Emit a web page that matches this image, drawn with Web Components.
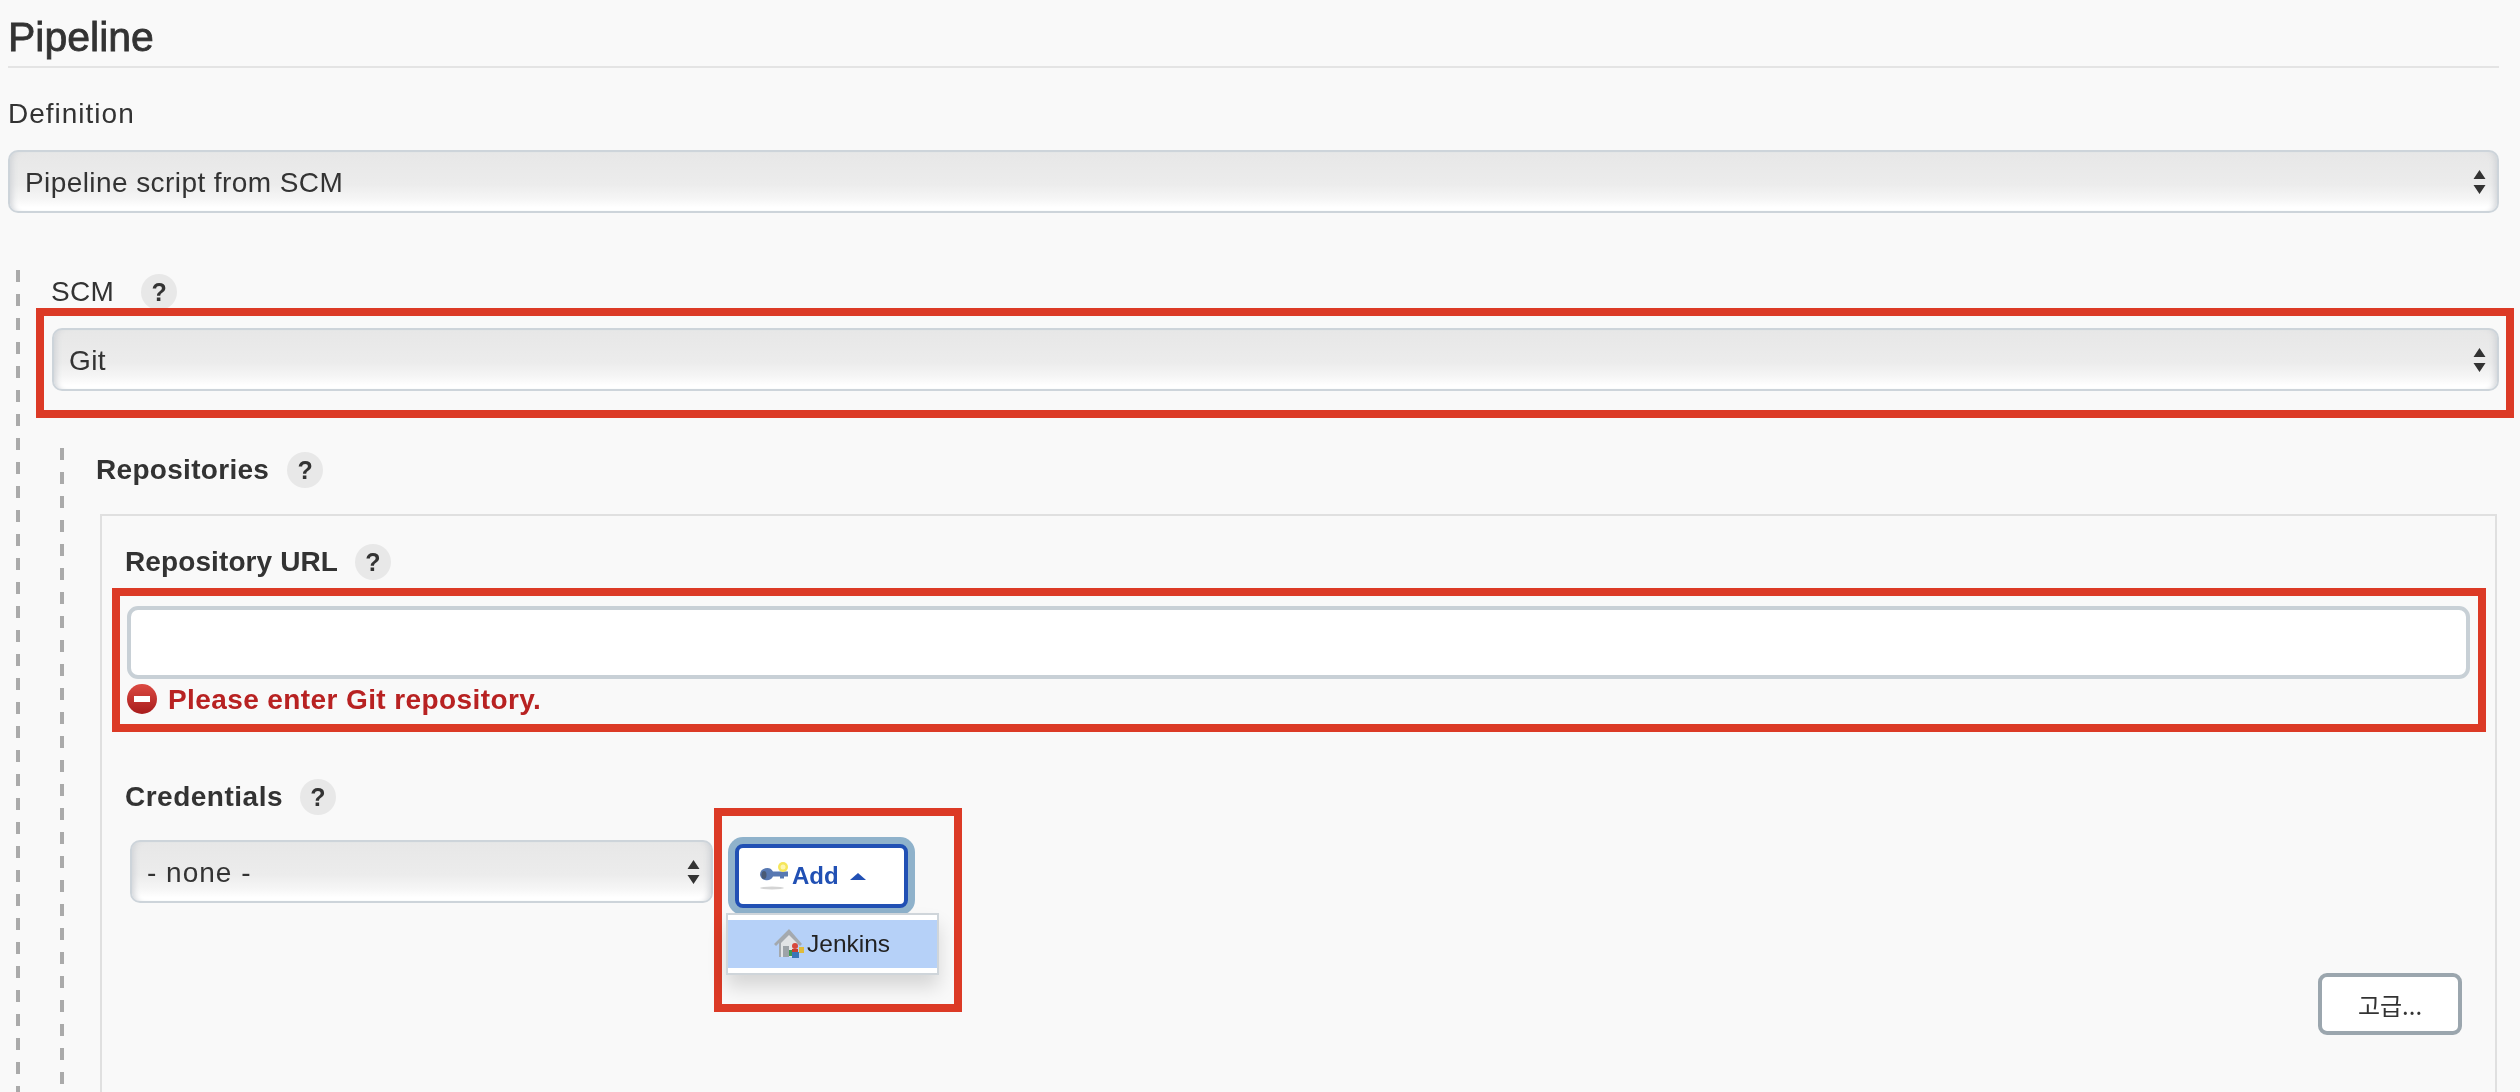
<!DOCTYPE html>
<html lang="en">
<head>
<meta charset="utf-8">
<title>Pipeline</title>
<style>
  html, body { margin: 0; height: 1092px; overflow: hidden; background: #f9f9f9; }
  body { font-family: "Liberation Sans", Arial, "Noto Sans CJK KR", sans-serif; color: #333; filter: blur(0.55px); }
</style>
</head>
<body>
<pipeline-page>
  <section-heading>Pipeline</section-heading>
  <field-label style="margin-top:28px;letter-spacing:1px">Definition</field-label>
  <fake-select style="margin-top:18px">Pipeline script from SCM</fake-select>

  <dashed-block style="margin:57px 0 0 8px">
    <field-label help style="height:32px;padding-top:2px;margin-left:-1px;--help-gap:27px">SCM</field-label>
    <red-callout style="margin:0 -15px 0 -16px;padding:12px 7px 19px 8px">
      <fake-select>Git</fake-select>
    </red-callout>

    <dashed-block style="margin:30px 0 0 8px">
      <field-label help bold>Repositories</field-label>
      <repo-panel style="margin:26px 2px 0 4px">
        <field-label help bold style="margin:28px 0 0 13px;letter-spacing:0.1px;--help-gap:17px">Repository URL</field-label>
        <red-callout style="margin-top:8px;padding:10px 8px 7px 7px">
          <text-box></text-box>
          <error-line>Please enter Git repository.</error-line>
        </red-callout>

        <div style="display:flex;align-items:flex-start;margin-top:45px">
          <div style="margin-left:13px;width:588px">
            <field-label help bold style="padding-top:2px;letter-spacing:0.5px;--help-gap:17px">Credentials</field-label>
            <fake-select style="margin:25px 0 0 5px;width:583px;letter-spacing:1px">- none -</fake-select>
          </div>
          <red-callout style="margin:31px 0 0 1px;width:248px;height:204px">
            <add-menu item="Jenkins">Add</add-menu>
          </red-callout>
          <plain-button style="margin:196px 24px 0 auto">고급...</plain-button>
        </div>
      </repo-panel>
    </dashed-block>
  </dashed-block>
</pipeline-page>

<script>
class PipelinePage extends HTMLElement {
  constructor() {
    super();
    this.attachShadow({ mode: 'open' });
    this.shadowRoot.innerHTML = `
      <style>
        :host { display: flex; flex-direction: column; box-sizing: border-box; width: 2520px; height: 1092px; padding: 0 21px 0 8px; overflow: hidden; }
      </style>
      <slot></slot>`;
  }
}

class SectionHeading extends HTMLElement {
  constructor() {
    super();
    this.attachShadow({ mode: 'open' });
    this.shadowRoot.innerHTML = `
      <style>
        :host { display: block; box-sizing: border-box; height: 68px; padding-top: 14px; border-bottom: 2px solid #e4e4e4;
          font-size: 41px; line-height: 46px; color: #333; -webkit-text-stroke: 0.8px #333; }
      </style>
      <slot></slot>`;
  }
}

class FieldLabel extends HTMLElement {
  constructor() {
    super();
    this.attachShadow({ mode: 'open' });
    const help = this.hasAttribute('help') ? '<help-badge></help-badge>' : '';
    this.shadowRoot.innerHTML = `
      <style>
        :host { display: flex; align-items: center; height: 36px; font-size: 28px; line-height: 36px; color: #333; letter-spacing: 0.3px; }
        :host([bold]) { font-weight: bold; }
        help-badge { margin-left: var(--help-gap, 18px); }
      </style>
      <slot></slot>${help}`;
  }
}

class HelpBadge extends HTMLElement {
  constructor() {
    super();
    this.attachShadow({ mode: 'open' });
    this.shadowRoot.innerHTML = `
      <style>
        :host { display: flex; flex: none; align-items: center; justify-content: center; width: 36px; height: 36px; border-radius: 50%;
          background: #e8e8e8; font-size: 25px; font-weight: bold; color: #333; letter-spacing: 0; }
      </style>
      ?`;
  }
}

class FakeSelect extends HTMLElement {
  constructor() {
    super();
    this.attachShadow({ mode: 'open' });
    this.shadowRoot.innerHTML = `
      <style>
        :host { display: flex; align-items: center; justify-content: space-between; box-sizing: border-box; height: 63px; padding: 0 11px 0 15px;
          border: 2px solid #cdd4da; border-radius: 10px; font-size: 28px; letter-spacing: 0.42px; color: #333;
          background: linear-gradient(#e7e7e7, #ececec 55%, #f6f6f6 80%, #fff 94%);
          box-shadow: inset 7px 0 6px -5px #cfd2d6, inset -7px 0 6px -5px #cfd2d6; }
        .value { padding-top: 2px; }
        svg { display: block; flex: none; }
      </style>
      <span class="value"><slot></slot></span>
      <svg width="13" height="24" viewBox="0 0 13 24"><path d="M6.5 0L12.5 9H.5zM.5 15h12L6.5 24z" fill="#333"/></svg>`;
  }
}

class DashedBlock extends HTMLElement {
  constructor() {
    super();
    this.attachShadow({ mode: 'open' });
    this.shadowRoot.innerHTML = `
      <style>
        :host { display: flex; flex-direction: column; flex: 1; padding: 4px 0 0 36px;
          background: repeating-linear-gradient(#aaa 0 12px, transparent 12px 24px) left top / 4px 100% no-repeat; }
      </style>
      <slot></slot>`;
  }
}

class RedCallout extends HTMLElement {
  constructor() {
    super();
    this.attachShadow({ mode: 'open' });
    this.shadowRoot.innerHTML = `
      <style>
        :host { display: block; box-sizing: border-box; flex: none; border: 8px solid #dc3a26; }
      </style>
      <slot></slot>`;
  }
}

class RepoPanel extends HTMLElement {
  constructor() {
    super();
    this.attachShadow({ mode: 'open' });
    this.shadowRoot.innerHTML = `
      <style>
        :host { display: block; flex: 1; padding: 0 9px 0 10px; border: 2px solid #e0e0e0; border-bottom: 0; }
      </style>
      <slot></slot>`;
  }
}

class TextBox extends HTMLElement {
  constructor() {
    super();
    this.attachShadow({ mode: 'open' });
    this.shadowRoot.innerHTML = `
      <style>
        :host { display: block; box-sizing: border-box; height: 73px; background: #fff; border: 4px solid #c8d0d6; border-radius: 11px; }
      </style>`;
  }
}

class ErrorLine extends HTMLElement {
  constructor() {
    super();
    this.attachShadow({ mode: 'open' });
    this.shadowRoot.innerHTML = `
      <style>
        :host { display: flex; align-items: center; gap: 11px; height: 36px; margin-top: 2px;
          font-size: 28px; font-weight: bold; letter-spacing: 0.4px; color: #b82222; }
        .msg { padding-top: 2px; }
        svg { display: block; flex: none; }
      </style>
      <svg width="30" height="30" viewBox="0 0 30 30">
        <defs><linearGradient id="err" x1="0" y1="0" x2="0" y2="1"><stop offset="0" stop-color="#dc4a42"/><stop offset="1" stop-color="#a81c1c"/></linearGradient></defs>
        <circle cx="15" cy="15" r="15" fill="url(#err)"/>
        <rect x="7" y="12" width="16" height="6" fill="#fff"/>
      </svg>
      <span class="msg"><slot></slot></span>`;
  }
}

class AddMenu extends HTMLElement {
  constructor() {
    super();
    this.attachShadow({ mode: 'open' });
    this.shadowRoot.innerHTML = `
      <style>
        :host { display: block; padding: 28px 0 0 4px; }
        .btn { display: flex; align-items: center; box-sizing: border-box; width: 173px; height: 64px; margin-left: 9px; padding-left: 21px;
          background: #fff; border: 4px solid #2150b4; border-radius: 8px; box-shadow: 0 0 0 7px #8fb2cb;
          font-size: 24px; font-weight: bold; color: #2150b4; }
        .btn svg { display: block; flex: none; }
        .caret { margin-left: 11px; }
        .menu { box-sizing: border-box; width: 213px; height: 62px; margin-top: 5px; padding: 5px 0; position: relative;
          background: #fff; border: 2px solid #cfd5da; box-shadow: 0 12px 18px rgba(0,0,0,.14); }
        .item { display: flex; align-items: center; height: 48px; padding-left: 46px; background: #b6d1f8; font-size: 24.5px; color: #222; }
        .item svg { display: block; flex: none; margin-right: 1px; }
      </style>
      <div class="btn">
        <svg width="32" height="32" viewBox="0 0 32 32">
          <ellipse cx="12" cy="28" rx="12" ry="1.5" fill="#d4d4d4"/>
          <path d="M0 15a7 7 0 0 1 13-3.5h15v5h-4v2h-4v-2h-7A7 7 0 0 1 0 15z" fill="#5778b2"/>
          <ellipse cx="4" cy="15" rx="2.5" ry="4" fill="#4a5a75"/>
          <circle cx="23" cy="7" r="5" fill="#f6e65a"/>
          <circle cx="23" cy="7" r="2.5" fill="#fdf6b0"/>
        </svg>
        <slot></slot>
        <svg class="caret" width="16" height="7" viewBox="0 0 16 7"><path d="M8 0l8 7H0z" fill="#2150b4"/></svg>
      </div>
      <div class="menu">
        <div class="item">
          <svg width="32" height="32" viewBox="0 0 32 32">
            <path d="M15 1L0 16l2 2 3-3v14h18V15l3 3 2-2z" fill="#a4a9ae"/>
            <path d="M15 7L7 15v14h16V15z" fill="#e2e4e6"/>
            <rect x="9" y="18" width="6" height="11" fill="#9da3a8"/>
            <circle cx="21" cy="18" r="3" fill="#d8483c"/>
            <rect x="18" y="21" width="6" height="5" fill="#c8402f"/>
            <rect x="18" y="24" width="7" height="6" fill="#3a76b8"/>
            <rect x="25" y="19" width="5" height="6" fill="#e0bb3a"/>
            <rect x="15" y="22" width="3" height="6" fill="#3f9a4f"/>
          </svg>
          <span>${this.getAttribute('item')}</span>
        </div>
      </div>`;
  }
}

class PlainButton extends HTMLElement {
  constructor() {
    super();
    this.attachShadow({ mode: 'open' });
    this.shadowRoot.innerHTML = `
      <style>
        :host { display: flex; align-items: center; justify-content: center; box-sizing: border-box; flex: none; width: 144px; height: 62px;
          background: #fff; border: 4px solid #9ba6ae; border-radius: 9px; font-size: 24px; color: #333;
          font-family: "Noto Sans CJK KR", "Liberation Sans", sans-serif; }
      </style>
      <slot></slot>`;
  }
}

customElements.define('pipeline-page', PipelinePage);
customElements.define('section-heading', SectionHeading);
customElements.define('help-badge', HelpBadge);
customElements.define('field-label', FieldLabel);
customElements.define('fake-select', FakeSelect);
customElements.define('dashed-block', DashedBlock);
customElements.define('red-callout', RedCallout);
customElements.define('repo-panel', RepoPanel);
customElements.define('text-box', TextBox);
customElements.define('error-line', ErrorLine);
customElements.define('add-menu', AddMenu);
customElements.define('plain-button', PlainButton);
</script>
</body>
</html>
